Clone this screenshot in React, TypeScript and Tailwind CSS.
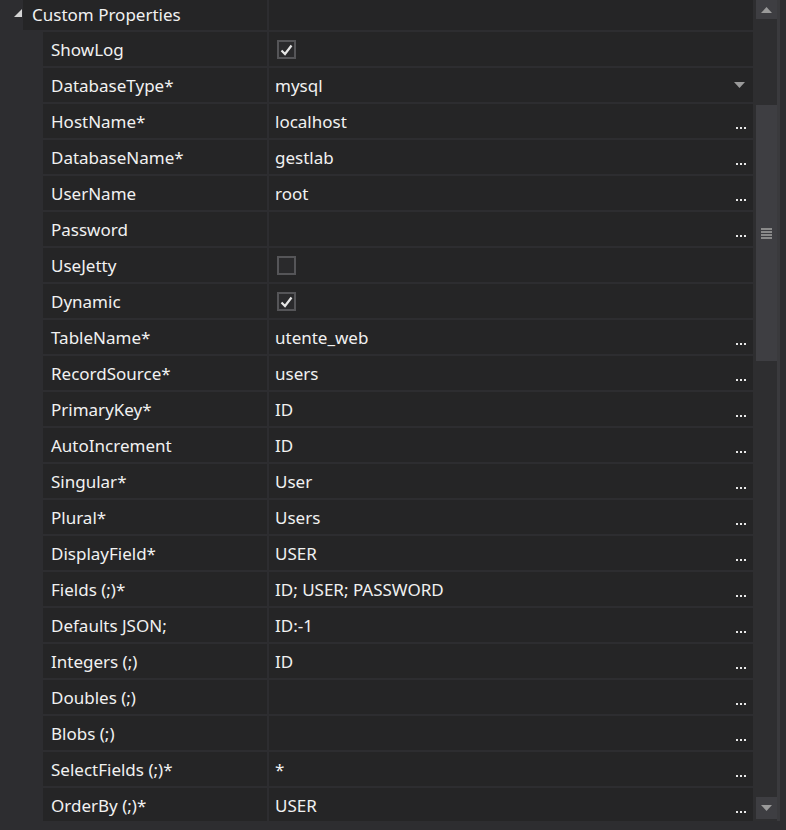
import React from 'react';

type Prop = { name: string; value?: string; kind?: 'text' | 'check' | 'dropdown'; checked?: boolean; dots?: boolean };

const props: Prop[] = [
  { name: 'ShowLog', kind: 'check', checked: true },
  { name: 'DatabaseType*', value: 'mysql', kind: 'dropdown' },
  { name: 'HostName*', value: 'localhost', dots: true },
  { name: 'DatabaseName*', value: 'gestlab', dots: true },
  { name: 'UserName', value: 'root', dots: true },
  { name: 'Password', value: '', dots: true },
  { name: 'UseJetty', kind: 'check', checked: false },
  { name: 'Dynamic', kind: 'check', checked: true },
  { name: 'TableName*', value: 'utente_web', dots: true },
  { name: 'RecordSource*', value: 'users', dots: true },
  { name: 'PrimaryKey*', value: 'ID', dots: true },
  { name: 'AutoIncrement', value: 'ID', dots: true },
  { name: 'Singular*', value: 'User', dots: true },
  { name: 'Plural*', value: 'Users', dots: true },
  { name: 'DisplayField*', value: 'USER', dots: true },
  { name: 'Fields (;)*', value: 'ID; USER; PASSWORD', dots: true },
  { name: 'Defaults JSON;', value: 'ID:-1', dots: true },
  { name: 'Integers (;)', value: 'ID', dots: true },
  { name: 'Doubles (;)', value: '', dots: true },
  { name: 'Blobs (;)', value: '', dots: true },
  { name: 'SelectFields (;)*', value: '*', dots: true },
  { name: 'OrderBy (;)*', value: 'USER', dots: true },
];

const Dots = () => (
  <div className="absolute right-[7px] bottom-[9px] flex gap-[2px]">
    <span className="w-[2px] h-[2px] bg-[#e8e8e8]" />
    <span className="w-[2px] h-[2px] bg-[#e8e8e8]" />
    <span className="w-[2px] h-[2px] bg-[#e8e8e8]" />
  </div>
);

const CheckBox = ({ checked }: { checked?: boolean }) => (
  <div className="w-[19px] h-[19px] border-2 border-[#555558] bg-[#2a2a2c] flex items-center justify-center">
    {checked && (
      <svg width="13" height="12" viewBox="0 0 13 12">
        <path d="M1.5 6.5 L5 10 L11.5 1.5" fill="none" stroke="#e6e6e6" strokeWidth="2.2" />
      </svg>
    )}
  </div>
);

const Row = ({ p }: { p: Prop }) => (
  <div className="flex h-[36px] shrink-0 border-b-2 border-[#2d2d30]">
    <div className="w-[43px] shrink-0 bg-[#2d2d30]" />
    <div className="w-[224px] shrink-0 bg-[#252526] flex items-center pl-[8px] pt-[1px]">{p.name}</div>
    <div className="w-[2px] shrink-0 bg-[#2d2d30]" />
    <div className="relative flex-1 bg-[#252526] flex items-center pl-[6px] pt-[1px]">
      {p.kind === 'check' ? (
        <div className="pl-[2px]">
          <CheckBox checked={p.checked} />
        </div>
      ) : (
        <span>{p.value}</span>
      )}
      {p.kind === 'dropdown' && (
        <svg className="absolute right-[8px] top-[14px]" width="11" height="6" viewBox="0 0 11 6">
          <polygon points="0,0 11,0 5.5,6" fill="#9a9a9a" />
        </svg>
      )}
      {p.dots && <Dots />}
    </div>
  </div>
);

export default function App() {
  return (
    <div className="w-[786px] h-[830px] bg-[#2d2d30] text-[#f1f1f1] text-[17px] flex flex-col overflow-hidden" style={{ fontFamily: '"Noto Sans", "Open Sans", sans-serif' }}>
      <div className="flex h-[821px] shrink-0">
        {/* grid */}
        <div className="w-[753px] shrink-0 flex flex-col overflow-hidden">
          <div className="flex h-[32px] shrink-0 border-b-2 border-[#2d2d30]">
            <div className="w-[23px] shrink-0 bg-[#2d2d30] flex items-start justify-end pr-[1px] pt-[9px]">
              <svg width="8" height="8" viewBox="0 0 8 8">
                <polygon points="8,0 8,8 0,8" fill="#d4d4d4" />
              </svg>
            </div>
            <div className="w-[244px] shrink-0 bg-[#252526] flex items-center pl-[9px]">Custom Properties</div>
            <div className="w-[2px] shrink-0 bg-[#2d2d30]" />
            <div className="flex-1 bg-[#252526]" />
          </div>
          {props.map((p) => (
            <Row key={p.name} p={p} />
          ))}
        </div>
        {/* scrollbar */}
        <div className="w-[24px] shrink-0 bg-[#2e2e30] flex flex-col pl-[3px]">
          <div className="h-[19px] shrink-0 bg-[#3e3e42] flex items-center justify-center">
            <svg width="11" height="6" viewBox="0 0 11 6">
              <polygon points="0,6 11,6 5.5,0" fill="#9a9a9a" />
            </svg>
          </div>
          <div className="h-[86px] shrink-0" />
          <div className="h-[256px] shrink-0 bg-[#3e3e42] flex items-center justify-center">
            <div className="flex flex-col gap-[1px]">
              <span className="w-[11px] h-[2px] bg-[#8a8a8a]" />
              <span className="w-[11px] h-[2px] bg-[#8a8a8a]" />
              <span className="w-[11px] h-[2px] bg-[#8a8a8a]" />
              <span className="w-[11px] h-[2px] bg-[#8a8a8a]" />
            </div>
          </div>
          <div className="flex-1" />
          <div className="h-[22px] shrink-0 bg-[#3e3e42] flex items-center justify-center mb-[2px]">
            <svg width="11" height="6" viewBox="0 0 11 6">
              <polygon points="0,0 11,0 5.5,6" fill="#9a9a9a" />
            </svg>
          </div>
        </div>
        <div className="w-[3px] shrink-0 bg-[#3a3a3d]" />
        <div className="flex-1 bg-[#2d2d30]" />
      </div>
      <div className="flex-1 bg-[#2d2d30]" />
    </div>
  );
}
